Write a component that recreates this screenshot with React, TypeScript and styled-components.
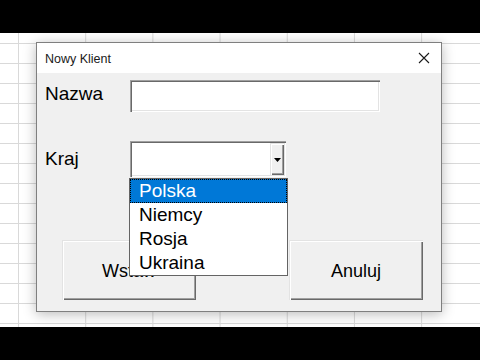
import React from 'react';
import styled, { createGlobalStyle } from 'styled-components';

const GlobalStyle = createGlobalStyle`
  html, body {
    margin: 0;
    padding: 0;
    background: #000;
  }
  * {
    box-sizing: border-box;
  }
`;

const countries = ['Polska', 'Niemcy', 'Rosja', 'Ukraina'];

const App: React.FC = () => {
  return (
    <>
      <GlobalStyle />
      <Screen>
        <Letterbox />
        <Sheet>
          <Dialog>
            <TitleBar>
              <TitleText>Nowy Klient</TitleText>
              <CloseIcon width="12" height="12" viewBox="0 0 12 12">
                <path d="M1 1 L11 11 M11 1 L1 11" stroke="#1a1a1a" strokeWidth="1.1" />
              </CloseIcon>
            </TitleBar>
            <Body>
              <FieldRow $top={7}>
                <Label $lineHeight={28}>Nazwa</Label>
                <TextBox />
              </FieldRow>
              <FieldRow $top={29}>
                <Label $lineHeight={36}>Kraj</Label>
                <Combo>
                  <ComboInput />
                  <DropButton>
                    <svg width="7" height="4" viewBox="0 0 7 4">
                      <polygon points="0,0 7,0 3.5,4" fill="#000" />
                    </svg>
                  </DropButton>
                  <DropList>
                    {countries.map((country, index) => (
                      <ListItem key={country} $selected={index === 0}>
                        {country}
                      </ListItem>
                    ))}
                  </DropList>
                </Combo>
              </FieldRow>
              <ButtonRow>
                <FormButton>Wstaw</FormButton>
                <FormButton>Anuluj</FormButton>
              </ButtonRow>
            </Body>
          </Dialog>
        </Sheet>
        <Letterbox />
      </Screen>
    </>
  );
};

const Screen = styled.div`
  width: 480px;
  height: 360px;
  display: flex;
  flex-direction: column;
  overflow: hidden;
`;

const Letterbox = styled.div`
  height: 33px;
  background: #000;
  flex-shrink: 0;
`;

const Sheet = styled.div`
  height: 294px;
  background-color: #fff;
  background-image: linear-gradient(to right, #d9d9d9 1px, transparent 1px),
    linear-gradient(to bottom, #d9d9d9 1px, transparent 1px);
  background-size: 67.2px 20px;
  background-position: 18px 10px;
  padding: 9px 0 0 36px;
`;

const Dialog = styled.div`
  width: 406px;
  height: 270px;
  border: 1px solid #7f7f7f;
  background: #f0f0f0;
  box-shadow: 0 2px 12px rgba(0, 0, 0, 0.28);
  display: flex;
  flex-direction: column;
`;

const TitleBar = styled.div`
  height: 30px;
  background: #fff;
  display: flex;
  align-items: center;
  justify-content: space-between;
  padding: 0 11px 0 8px;
`;

const TitleText = styled.span`
  font-family: 'Liberation Sans', Arial, sans-serif;
  font-size: 12.5px;
  color: #1a1a1a;
  padding-top: 1px;
`;

const CloseIcon = styled.svg`
  display: block;
`;

const Body = styled.div`
  flex: 1;
  display: flex;
  flex-direction: column;
  padding: 0 0 0 8px;
`;

const FieldRow = styled.div<{ $top: number }>`
  display: flex;
  align-items: flex-start;
  margin-top: ${p => p.$top}px;
`;

const Label = styled.div<{ $lineHeight: number }>`
  width: 85px;
  font-family: 'Liberation Sans', Arial, sans-serif;
  font-size: 19px;
  line-height: ${p => p.$lineHeight}px;
  color: #000;
`;

const sunken = `
  box-shadow: inset 1px 1px #a0a0a0, inset 2px 2px #696969,
    inset -1px -1px #ffffff, inset -2px -2px #e3e3e3;
`;

const raised = `
  box-shadow: inset 1px 1px #e3e3e3, inset 2px 2px #ffffff,
    inset -1px -1px #696969, inset -2px -2px #a0a0a0;
`;

const TextBox = styled.div`
  width: 250px;
  height: 32px;
  background: #fff;
  ${sunken}
`;

const Combo = styled.div`
  position: relative;
  width: 156px;
  height: 36px;
  background: #fff;
  display: flex;
  justify-content: flex-end;
  padding: 2px;
  ${sunken}
`;

const ComboInput = styled.div`
  flex: 1;
`;

const DropButton = styled.div`
  width: 14px;
  background: #f0f0f0;
  display: flex;
  align-items: center;
  justify-content: center;
  ${raised}

  svg {
    display: block;
    margin-top: 2px;
  }
`;

const DropList = styled.div`
  position: absolute;
  top: 37px;
  left: -1px;
  width: 159px;
  background: #fff;
  border: 1px solid #646464;
  z-index: 2;
`;

const ListItem = styled.div<{ $selected: boolean }>`
  height: 24px;
  line-height: 24px;
  padding-left: 9px;
  font-family: 'Liberation Sans', Arial, sans-serif;
  font-size: 19px;
  color: ${p => (p.$selected ? '#fff' : '#000')};
  background: ${p => (p.$selected ? '#0078d7' : 'transparent')};
  outline: ${p => (p.$selected ? '1px dotted #000' : 'none')};
  outline-offset: -1px;
`;

const ButtonRow = styled.div`
  display: flex;
  gap: 93px;
  margin-top: 63px;
  padding-left: 17px;
`;

const FormButton = styled.div`
  width: 134px;
  height: 60px;
  background: #f0f0f0;
  display: flex;
  align-items: center;
  justify-content: center;
  font-family: 'Liberation Sans', Arial, sans-serif;
  font-size: 18px;
  color: #000;
  padding-top: 2px;
  ${raised}
`;

export default App;
